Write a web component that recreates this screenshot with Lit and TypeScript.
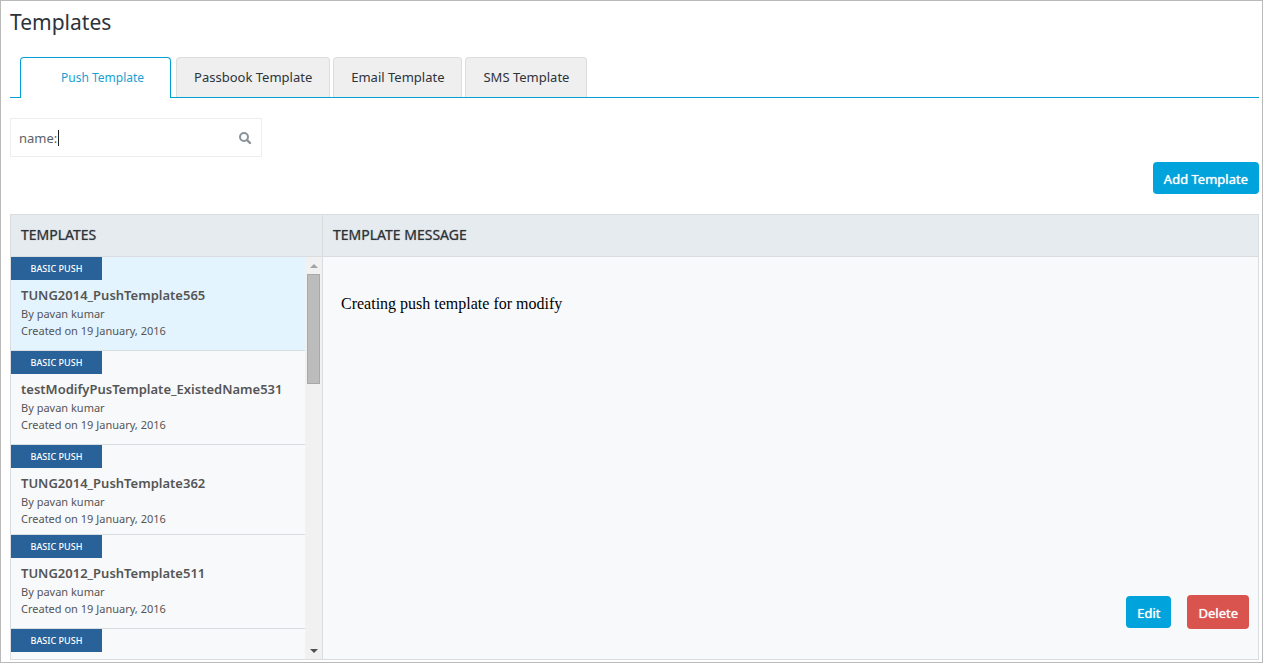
import { LitElement, html, css } from "lit";
import { customElement, property, state } from "lit/decorators.js";
import { classMap } from "lit/directives/class-map.js";

interface Template {
  name: string;
  author: string;
  created: string;
  compact?: boolean;
}

const TABS = ["Push Template", "Passbook Template", "Email Template", "SMS Template"];

const TEMPLATES: Template[] = [
  { name: "TUNG2014_PushTemplate565", author: "pavan kumar", created: "19 January, 2016" },
  { name: "testModifyPusTemplate_ExistedName531", author: "pavan kumar", created: "19 January, 2016" },
  { name: "TUNG2014_PushTemplate362", author: "pavan kumar", created: "19 January, 2016", compact: true },
  { name: "TUNG2012_PushTemplate511", author: "pavan kumar", created: "19 January, 2016" },
];

@customElement("template-card")
class TemplateCard extends LitElement {
  @property({ attribute: false }) item?: Template;
  @property({ type: Boolean, reflect: true }) selected = false;

  static styles = css`
    :host {
      display: block;
      flex: none;
      box-sizing: border-box;
      border-bottom: 1px solid #dadddf;
      padding-bottom: 11px;
      color: #555;
      font: 11px/17px "Noto Sans", sans-serif;
    }
    :host([selected]) {
      background: #e3f4ff;
    }
    :host(.compact) {
      padding-bottom: 7px;
    }
    :host(.cut) {
      border-bottom: 0;
    }
    .badge {
      display: block;
      width: 91px;
      background: #286298;
      color: #fff;
      font-size: 9px;
      font-weight: 500;
      line-height: 23px;
      text-align: center;
    }
    .name,
    .meta {
      margin: 0;
      padding-left: 10px;
    }
    .name {
      padding-top: 5px;
      font-size: 13px;
      font-weight: 600;
      line-height: 20px;
    }
  `;

  render() {
    return html`
      <span class="badge">BASIC PUSH</span>
      ${this.item
        ? html`
            <h3 class="name">${this.item.name}</h3>
            <p class="meta">By ${this.item.author}</p>
            <p class="meta">Created on ${this.item.created}</p>
          `
        : null}
    `;
  }
}

@customElement("app-root")
class AppRoot extends LitElement {
  @state() private tab = 0;

  static styles = css`
    :host {
      display: flex;
      flex-direction: column;
      box-sizing: border-box;
      height: 100vh;
      border: 1px solid #bababa;
      padding: 0 3px 2px 9px;
      background: #fff;
      color: #2d333b;
      font: 13px/20px "Noto Sans", sans-serif;
      overflow: hidden;
    }
    button,
    input {
      font: inherit;
      color: inherit;
      margin: 0;
    }
    h1 {
      margin: 6px 0 20px;
      font-size: 21px;
      font-weight: 400;
      line-height: 30px;
    }
    .tabs {
      display: flex;
      flex: none;
      gap: 3px;
      padding-left: 10px;
      border-bottom: 1px solid #00a0d2;
    }
    .tab {
      height: 40px;
      padding: 0 17px 2px;
      border: 1px solid #ddd;
      border-bottom: 0;
      border-radius: 4px 4px 0 0;
      background: #efefef;
    }
    .tab.active {
      height: 41px;
      margin: 0 2px -1px 0;
      padding: 0 26px 0 40px;
      border-color: #00a0d2;
      background: #fff;
      color: #189fd3;
      font-size: 12px;
    }
    .search {
      display: flex;
      flex: none;
      align-items: center;
      box-sizing: border-box;
      width: 252px;
      height: 39px;
      margin-top: 20px;
      padding: 0 9px 0 8px;
      border: 1px solid #eee;
      color: #5a5f66;
    }
    .search input {
      field-sizing: content;
      padding: 0 1px 0 0;
      border: 0;
      outline: 0;
      background: none;
    }
    .caret {
      width: 1px;
      height: 16px;
      background: #222;
    }
    .search svg {
      margin-left: auto;
    }
    .btn {
      height: 32px;
      padding: 2px 11px 0;
      border: 0;
      border-radius: 4px;
      background: #00a3db;
      color: #fff;
      text-shadow: 0 0 1px #fff;
    }
    .add {
      flex: none;
      align-self: flex-end;
      margin: 5px 0 20px;
    }
    .panel {
      display: grid;
      grid-template: 41px minmax(0, 1fr) / 311px minmax(0, 1fr);
      gap: 1px;
      flex: 1;
      min-height: 0;
      border: 1px solid #dadddf;
      background: #dadddf;
    }
    .panel h2 {
      margin: 0;
      padding: 0 10px 2px;
      background: #e6ebef;
      font-size: 14px;
      font-weight: 400;
      line-height: 39px;
      text-shadow: 0 0 1px #777;
    }
    .list {
      display: flex;
      background: #f8f9fb;
      overflow: hidden;
    }
    .cards {
      display: flex;
      flex: 1;
      flex-direction: column;
      overflow: hidden;
    }
    .bar {
      display: flex;
      flex-direction: column;
      align-items: center;
      justify-content: space-between;
      width: 17px;
      padding: 7px 0 6px;
      box-sizing: border-box;
      background: #f1f1f1;
    }
    .thumb {
      box-sizing: border-box;
      width: 13px;
      height: 110px;
      margin: 6px 0 auto;
      border: 1px solid #a8a8a8;
      background: #bcbcbc;
    }
    .message {
      display: flex;
      flex-direction: column;
      justify-content: space-between;
      padding: 36px 9px 30px 18px;
      background: #f8f9fb;
      color: #000;
    }
    .message p {
      margin: 0;
      font: 16px/22px "Liberation Serif", serif;
    }
    .actions {
      display: flex;
      align-items: center;
      justify-content: flex-end;
      gap: 16px;
    }
    .btn.delete {
      height: 34px;
      background: #d9534f;
    }
  `;

  render() {
    return html`
      <h1>Templates</h1>
      <div class="tabs" role="tablist">
        ${TABS.map(
          (label, i) => html`<button
            class=${classMap({ tab: true, active: i === this.tab })}
            role="tab"
            aria-selected=${i === this.tab ? "true" : "false"}
            @click=${() => (this.tab = i)}
          >${label}</button>`
        )}
      </div>
      <label class="search">
        <input type="text" aria-label="Search templates" value="name:" />
        <span class="caret"></span>
        <svg width="14" height="14" viewBox="0 0 14 14" fill="none" stroke="#8b9299" aria-hidden="true">
          <circle cx="6" cy="6" r="4" stroke-width="2" />
          <path d="M9 9l3 3" stroke-width="2.4" stroke-linecap="round" />
        </svg>
      </label>
      <button class="btn add">Add Template</button>
      <section class="panel">
        <h2>TEMPLATES</h2>
        <h2>TEMPLATE MESSAGE</h2>
        <div class="list">
          <div class="cards">
            ${TEMPLATES.map(
              (item, i) => html`<template-card
                class=${classMap({ compact: !!item.compact })}
                .item=${item}
                ?selected=${i === 0}
              ></template-card>`
            )}
            <template-card class="cut"></template-card>
          </div>
          <div class="bar" aria-hidden="true">
            <svg width="8" height="4" viewBox="0 0 8 4"><path d="M0 4L4 0l4 4z" fill="#a3a3a3" /></svg>
            <div class="thumb"></div>
            <svg width="8" height="4" viewBox="0 0 8 4"><path d="M0 0h8L4 4z" fill="#505050" /></svg>
          </div>
        </div>
        <div class="message">
          <p>Creating push template for modify</p>
          <div class="actions">
            <button class="btn">Edit</button>
            <button class="btn delete">Delete</button>
          </div>
        </div>
      </section>
    `;
  }
}
